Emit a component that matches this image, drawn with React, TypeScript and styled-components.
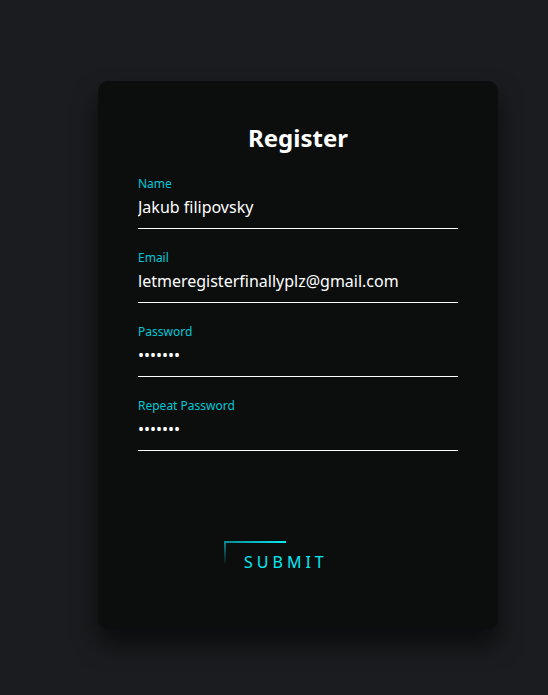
import React from "react";
import styled, { createGlobalStyle } from "styled-components";

const GlobalStyle = createGlobalStyle`
  html, body {
    margin: 0;
    padding: 0;
    background: #1b1c1f;
    font-family: "Noto Sans", "Open Sans", sans-serif;
  }
  * { box-sizing: border-box; }
`;

const Page = styled.div`
  width: 548px;
  height: 695px;
  padding: 81px 0 0 98px;
  background: #1b1c1f;
`;

const Card = styled.form`
  width: 400px;
  height: 548px;
  padding: 40px;
  background: #0c0e0e;
  border-radius: 10px;
  box-shadow: 0 15px 25px rgba(0, 0, 0, 0.6);
  display: flex;
  flex-direction: column;
`;

const Title = styled.h2`
  margin: 0 0 22px;
  padding: 0;
  font-size: 24px;
  line-height: 33px;
  font-weight: 700;
  color: #ffffff;
  text-align: center;
`;

const Field = styled.div`
  display: flex;
  flex-direction: column;
  margin-bottom: 21px;
`;

const Label = styled.label`
  font-size: 12px;
  line-height: 16px;
  color: #00c8d4;
`;

const Input = styled.input`
  width: 100%;
  margin: 0;
  padding: 4px 0 10px;
  font-family: "Noto Sans", "Open Sans", sans-serif;
  font-size: 16px;
  line-height: 22px;
  height: 37px;
  color: #ffffff;
  background: transparent;
  border: none;
  border-bottom: 1px solid #ffffff;
  outline: none;
  caret-color: #ffffff;
`;

const Actions = styled.div`
  display: flex;
  margin-top: 69px;
  padding-left: 86px;
`;

const SubmitButton = styled.button`
  position: relative;
  padding: 10px 20px;
  margin: 0;
  background: transparent;
  border: none;
  font-family: "Noto Sans", "Open Sans", sans-serif;
  font-size: 16px;
  line-height: 22px;
  letter-spacing: 4px;
  color: #03e9f4;
  text-transform: uppercase;
  cursor: pointer;

  &::before {
    content: "";
    position: absolute;
    left: 0;
    top: 0;
    width: 62px;
    height: 2px;
    background: linear-gradient(90deg, #0a8a94, #03e9f4);
  }

  &::after {
    content: "";
    position: absolute;
    left: 0;
    top: 0;
    width: 2px;
    height: 24px;
    background: linear-gradient(180deg, #0a8a94, transparent);
  }
`;

const fields = [
  { id: "name", label: "Name", type: "text", value: "Jakub filipovsky" },
  { id: "email", label: "Email", type: "email", value: "letmeregisterfinallyplz@gmail.com" },
  { id: "password", label: "Password", type: "password", value: "1234567" },
  { id: "repeat", label: "Repeat Password", type: "password", value: "1234567" },
];

export default function App() {
  return (
    <>
      <GlobalStyle />
      <Page>
        <Card onSubmit={(e) => e.preventDefault()}>
          <Title>Register</Title>
          {fields.map((f, i) => (
            <Field key={f.id}>
              <Label htmlFor={f.id}>{f.label}</Label>
              <Input
                id={f.id}
                type={f.type}
                defaultValue={f.value}
                autoFocus={i === fields.length - 1}
              />
            </Field>
          ))}
          <Actions>
            <SubmitButton type="submit">Submit</SubmitButton>
          </Actions>
        </Card>
      </Page>
    </>
  );
}
